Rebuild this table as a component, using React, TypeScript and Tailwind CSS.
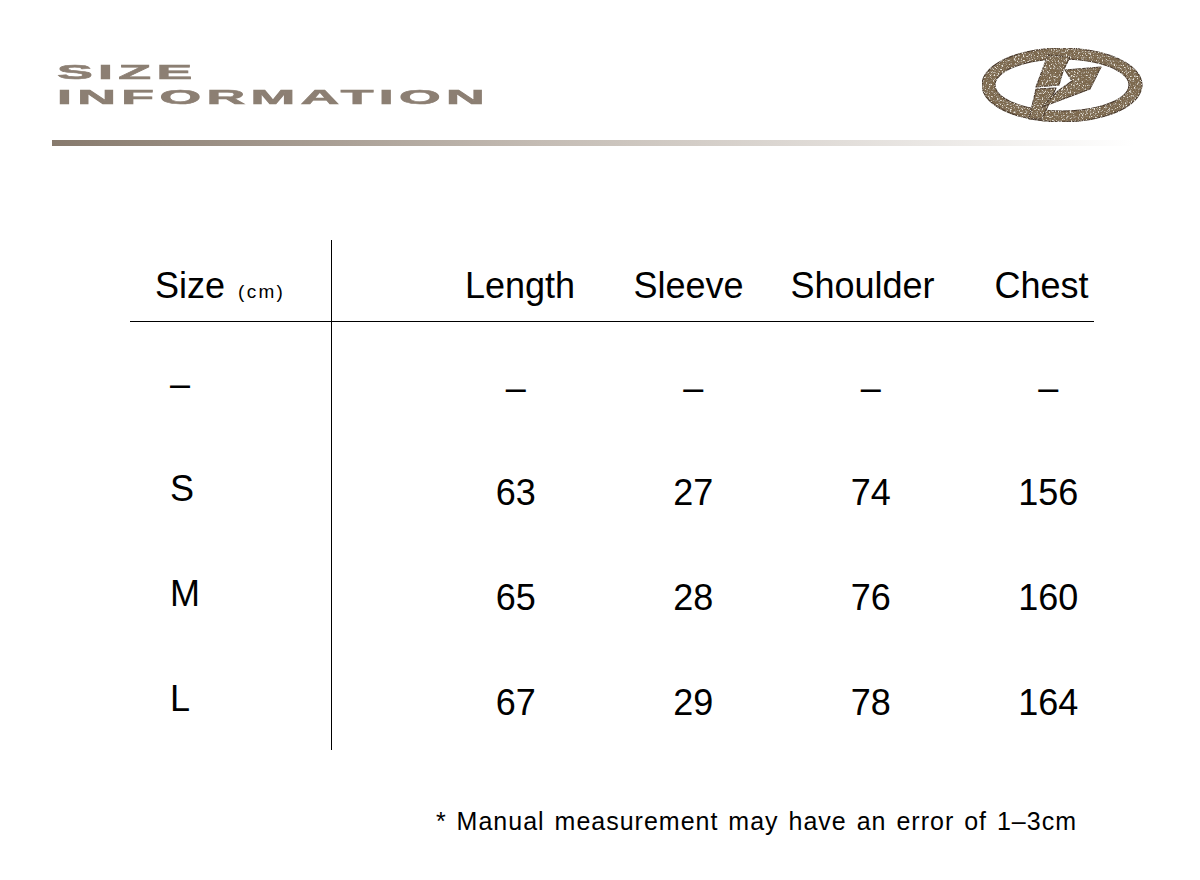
import React from "react";

const columns = ["Length", "Sleeve", "Shoulder", "Chest"];

const rows = [
  { size: "–", values: ["–", "–", "–", "–"] },
  { size: "S", values: ["63", "27", "74", "156"] },
  { size: "M", values: ["65", "28", "76", "160"] },
  { size: "L", values: ["67", "29", "78", "164"] },
];

function Logo() {
  return (
    <svg width="162" height="76" viewBox="0 0 162 76">
      <defs>
        <filter id="grain" x="0" y="0" width="100%" height="100%">
          <feTurbulence type="fractalNoise" baseFrequency="0.75" numOctaves="3" seed="11" result="noise" />
          <feColorMatrix
            in="noise"
            type="matrix"
            values="0 0 0 0 0.86  0 0 0 0 0.82  0 0 0 0 0.74  0 0 0 5 -2.85"
            result="light"
          />
          <feComposite in="light" in2="SourceGraphic" operator="in" result="lightIn" />
          <feColorMatrix
            in="noise"
            type="matrix"
            values="0 0 0 0 0.3  0 0 0 0 0.24  0 0 0 0 0.17  0 0 0 -5 2.3"
            result="dark"
          />
          <feComposite in="dark" in2="SourceGraphic" operator="in" result="darkIn" />
          <feMerge>
            <feMergeNode in="SourceGraphic" />
            <feMergeNode in="lightIn" />
            <feMergeNode in="darkIn" />
          </feMerge>
        </filter>
      </defs>
      <g filter="url(#grain)" fill="#7c674e" stroke="#45362a" strokeWidth="1.1" strokeLinejoin="round">
        <path
          fillRule="evenodd"
          d="M81 1 A80 37 0 1 0 81.01 1 Z M81 12 A67 26 0 1 1 80.99 12 Z"
        />
        <polygon points="67,8 89,10 82,24 78,38 55,40" />
        <polygon points="55,42 75,41 61,72 48,72" />
        <polygon points="84,23 120,20 109,42 61,60 77,44 91,34" />
      </g>
    </svg>
  );
}

export default function App() {
  return (
    <div
      className="w-[1200px] h-[880px] bg-white overflow-hidden text-black"
      style={{ fontFamily: '"Liberation Sans", Arial, sans-serif' }}
    >
      {/* header */}
      <div className="h-[140px] flex justify-between items-start">
        <div className="ml-[57px] pt-[60px] text-[20px] leading-[25px] font-bold text-[#8c7f73] tracking-[0.1em] uppercase [-webkit-text-stroke:0.6px_#8c7f73]">
          <div className="origin-left scale-x-[2.68] whitespace-nowrap">Size</div>
          <div className="origin-left scale-x-[2.68] whitespace-nowrap">Information</div>
        </div>
        <div className="pt-[47px] mr-[57px]">
          <Logo />
        </div>
      </div>
      <div className="ml-[52px] w-[1083px] h-[6px] bg-gradient-to-r from-[#877a6d] via-[#c4bcb4] via-45% to-white" />

      {/* table */}
      <div className="mt-[94px] ml-[130px] w-[964px] flex">
        <div className="w-[201px] shrink-0">
          <div className="h-[82px] border-b border-black flex items-end pb-[17px] pl-[25px]">
            <div className="flex items-baseline">
              <span className="text-[36px] leading-none">Size</span>
              <span className="text-[19px] leading-none tracking-[0.12em] ml-[13px]">(cm)</span>
            </div>
          </div>
          <div className="pt-[13px]">
            {rows.map((r) => (
              <div key={r.size} className="h-[105px] flex items-center pl-[40px]">
                <span className="text-[36px] leading-none -mt-2">{r.size}</span>
              </div>
            ))}
          </div>
        </div>
        <div className="w-[763px] min-w-0 shrink-0 border-l border-black h-[510px]">
          <div className="h-[82px] border-b border-black flex items-end pb-[17px]">
            <div className="pl-[104px] grid grid-cols-[168px_169px_179px_179px] shrink-0">
              {columns.map((c) => (
                <div key={c} className="text-[36px] leading-none text-center whitespace-nowrap">
                  {c}
                </div>
              ))}
            </div>
          </div>
          <div className="pt-[13px]">
            {rows.map((r, i) => (
              <div key={i} className="h-[105px] pl-[95px] grid grid-cols-[177.5px_177.5px_177.5px_177.5px] items-center">
                {r.values.map((v, j) => (
                  <div key={j} className="text-[36px] leading-none text-center">
                    {v}
                  </div>
                ))}
              </div>
            ))}
          </div>
        </div>
      </div>

      {/* note */}
      <div className="mt-[52px] w-[1077px] flex justify-end">
        <div className="text-[25px] leading-[28px] tracking-[1px] [word-spacing:2px] whitespace-nowrap">
          * Manual measurement may have an error of 1–3cm
        </div>
      </div>
    </div>
  );
}
